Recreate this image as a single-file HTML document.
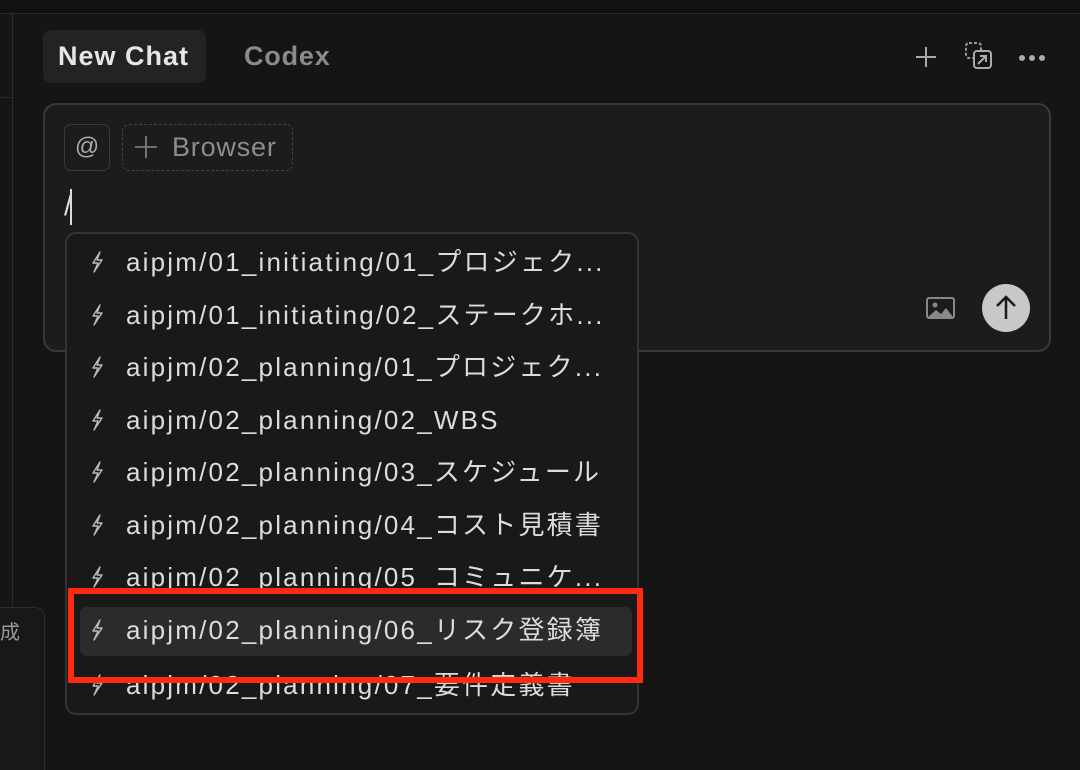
<!DOCTYPE html>
<html><head><meta charset="utf-8"><style>
*{margin:0;padding:0;box-sizing:border-box}
html,body{width:1080px;height:770px;overflow:hidden}
body{background:#151515;position:relative;font-family:"Liberation Sans","Noto Sans CJK JP",sans-serif;color:#ddd}
.abs{position:absolute}
.item{position:absolute;left:0;height:48px;width:100%;font-size:26px;letter-spacing:2.2px;color:#dcdcdc;white-space:nowrap}
.item svg{position:absolute;left:25px;top:13px}
.item span{position:absolute;left:61px;top:0;line-height:48px}
</style></head><body>
<div class="abs" style="left:0;top:0;width:1080px;height:14px;background:#111;border-bottom:1px solid #2a2a2a"></div>
<div class="abs" style="left:12px;top:14px;width:1px;height:756px;background:#2a2a2a"></div>
<div class="abs" style="left:0;top:97px;width:12px;height:1px;background:#2a2a2a"></div>
<div class="abs" style="left:-20px;top:607px;width:65px;height:200px;background:#181818;border:1px solid #2c2c2c;border-radius:10px"></div>
<div class="abs" style="left:0;top:616px;font-size:20px;color:#999">成</div>

<div class="abs" style="left:43px;top:30px;width:163px;height:53px;background:#232323;border-radius:8px"></div>
<div class="abs" style="left:58px;top:41px;font-size:27px;letter-spacing:1px;font-weight:bold;color:#e6e6e6">New Chat</div>
<div class="abs" style="left:244px;top:41px;font-size:27px;letter-spacing:0.8px;font-weight:bold;color:#8a8a8a">Codex</div>
<svg class="abs" style="left:912px;top:43px" width="28" height="28" viewBox="0 0 28 28"><path d="M14 4v20M4 14h20" stroke="#aaa" stroke-width="2"/></svg>
<svg class="abs" style="left:963px;top:40px" width="34" height="34" viewBox="0 0 34 34"><rect x="3" y="3" width="15" height="15" rx="3" fill="none" stroke="#999" stroke-width="2" stroke-dasharray="3 2"/><rect x="11" y="11" width="17" height="17" rx="3" fill="#151515" stroke="#aaa" stroke-width="2"/><path d="M15 24l8-8M17 16h6v6" stroke="#aaa" stroke-width="2" fill="none"/></svg>
<div class="abs" style="left:1019px;top:55px;width:6px;height:6px;border-radius:3px;background:#aaa"></div>
<div class="abs" style="left:1029px;top:55px;width:6px;height:6px;border-radius:3px;background:#aaa"></div>
<div class="abs" style="left:1039px;top:55px;width:6px;height:6px;border-radius:3px;background:#aaa"></div>

<div class="abs" style="left:43px;top:103px;width:1008px;height:249px;background:#1c1c1c;border:2px solid #383838;border-radius:13px"></div>
<div class="abs" style="left:64px;top:124px;width:46px;height:47px;border:1px solid #3a3a3a;border-radius:7px;font-size:24px;color:#aaa;text-align:center;line-height:44px">@</div>
<div class="abs" style="left:122px;top:124px;width:171px;height:47px;border:1px dashed #444;border-radius:7px"></div>
<svg class="abs" style="left:134px;top:135px" width="24" height="24" viewBox="0 0 24 24"><path d="M12 1v22M1 12h22" stroke="#888" stroke-width="1.6"/></svg>
<div class="abs" style="left:172px;top:132px;font-size:27px;letter-spacing:0.8px;color:#8c8c8c">Browser</div>
<div class="abs" style="left:64px;top:190px;font-size:28px;color:#ddd">/</div>
<div class="abs" style="left:70px;top:189px;width:2px;height:36px;background:#ddd"></div>
<svg class="abs" style="left:926px;top:297px" width="29" height="23" viewBox="0 0 29 23"><rect x="1" y="1" width="27" height="20" rx="2" fill="none" stroke="#888" stroke-width="2"/><circle cx="9" cy="8" r="2.5" fill="#888"/><path d="M2 20l8-7 5 4 5-6 7 9z" fill="#888"/></svg>
<div class="abs" style="left:982px;top:284px;width:48px;height:48px;border-radius:24px;background:#c8c8c8"></div>
<svg class="abs" style="left:994px;top:295px" width="24" height="26" viewBox="0 0 24 26"><path d="M12 24V3M3 11l9-9 9 9" stroke="#1a1a1a" stroke-width="2.5" fill="none"/></svg>

<div class="abs" style="left:65px;top:232px;width:574px;height:483px;background:#191919;border:2px solid #333;border-radius:11px;overflow:hidden">
<div class="abs" style="left:13px;top:373px;width:552px;height:49px;background:#2b2b2b;border-radius:7px"></div>
</div>
<svg width="0" height="0" style="position:absolute"><defs><symbol id="b" viewBox="0 0 14 22"><path d="M10 1L3 12h5l-4 9 8-12H7z" fill="none" stroke="#bbb" stroke-width="1.4" stroke-linejoin="round"/></symbol></defs></svg>
<div class="abs" style="left:65px;top:232px;width:574px;height:483px;overflow:hidden">
<div class="item" style="top:6px"><svg width="14" height="22"><use href="#b"/></svg><span>aipjm/01_initiating/01_プロジェク...</span></div>
<div class="item" style="top:59px"><svg width="14" height="22"><use href="#b"/></svg><span>aipjm/01_initiating/02_ステークホ...</span></div>
<div class="item" style="top:111px"><svg width="14" height="22"><use href="#b"/></svg><span>aipjm/02_planning/01_プロジェク...</span></div>
<div class="item" style="top:164px"><svg width="14" height="22"><use href="#b"/></svg><span>aipjm/02_planning/02_WBS</span></div>
<div class="item" style="top:216px"><svg width="14" height="22"><use href="#b"/></svg><span>aipjm/02_planning/03_スケジュール</span></div>
<div class="item" style="top:269px"><svg width="14" height="22"><use href="#b"/></svg><span>aipjm/02_planning/04_コスト見積書</span></div>
<div class="item" style="top:321px"><svg width="14" height="22"><use href="#b"/></svg><span>aipjm/02_planning/05_コミュニケ...</span></div>
<div class="item" style="top:374px"><svg width="14" height="22"><use href="#b"/></svg><span>aipjm/02_planning/06_リスク登録簿</span></div>
<div class="item" style="top:429px"><svg width="14" height="22"><use href="#b"/></svg><span>aipjm/02_planning/07_要件定義書</span></div>
</div>
<div class="abs" style="left:68px;top:588px;width:575px;height:95px;border:6px solid #ff2a10"></div>
</body></html>
